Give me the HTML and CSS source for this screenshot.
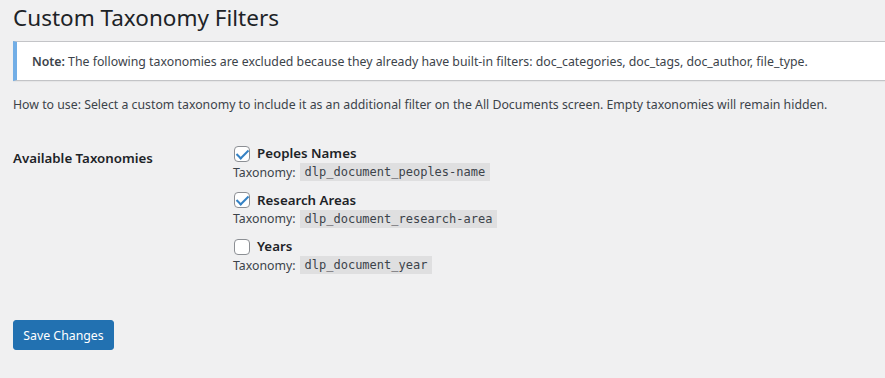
FILE: index.html
```html
<!DOCTYPE html>
<html lang="en">

<head>
    <meta charset="UTF-8" />
    <title>Custom Taxonomy Filters</title>
    <link rel="stylesheet" href="styles.css">
</head>

<body>
    <div class="wrap">
        <h1>Custom Taxonomy Filters</h1>

        <div class="notice">
            <p><strong>Note:</strong> The following taxonomies are excluded because they already have built-in filters: doc_categories, doc_tags, doc_author, file_type.</p>
        </div>

        <p class="howto">How to use: Select a custom taxonomy to include it as an additional filter on the All Documents screen. Empty taxonomies will remain hidden.</p>

        <form>
            <table class="form-table">
                <tr>
                    <th>Available Taxonomies</th>
                    <td>
                        <div class="tax">
                            <label><input type="checkbox" checked> Peoples Names</label>
                            <div class="slug">Taxonomy: <code>dlp_document_peoples-name</code></div>
                        </div>
                        <div class="tax">
                            <label><input type="checkbox" checked> Research Areas</label>
                            <div class="slug">Taxonomy: <code>dlp_document_research-area</code></div>
                        </div>
                        <div class="tax">
                            <label><input type="checkbox"> Years</label>
                            <div class="slug">Taxonomy: <code>dlp_document_year</code></div>
                        </div>
                    </td>
                </tr>
            </table>

            <p class="submit"><button type="button" class="button-primary">Save Changes</button></p>
        </form>
    </div>
</body>

</html>
```

FILE: styles.css
```css
* {
    box-sizing: border-box;
}

html,
body {
    margin: 0;
    padding: 0;
}

body {
    background: #f0f0f1;
    color: #3c434a;
    font-family: "Noto Sans", sans-serif;
    font-size: 12.3px;
    line-height: 1.4;
}

.wrap {
    margin: 0 0 0 13px;
}

h1 {
    margin: 0;
    padding: 3px 0 4px;
    font-size: 22.5px;
    font-weight: 400;
    line-height: 1.3;
    color: #1d2327;
}

.notice {
    background: #fff;
    border: 1px solid #c3c4c7;
    border-left: 4px solid #72aee6;
    border-right: 0;
    box-shadow: 0 1px 1px rgba(0, 0, 0, .04);
    margin: 5px 0 0;
    padding: 1px 15px;
}

.notice p {
    margin: 10px 0 9px;
}

.notice strong {
    font-weight: 600;
}

.howto {
    margin: 15px 0 0;
}

.form-table {
    border-collapse: collapse;
    margin-top: 21px;
}

.form-table th {
    width: 220px;
    vertical-align: top;
    text-align: left;
    padding: 14px 0 0;
    font-size: 13.3px;
    font-weight: 600;
    color: #1d2327;
}

.form-table td {
    padding: 9px 0 0;
    vertical-align: top;
}

.tax {
    margin-bottom: 9.5px;
}

.tax label {
    display: flex;
    align-items: center;
    gap: 7px;
    font-size: 13.3px;
    font-weight: 600;
    color: #1d2327;
    height: 20px;
}

.tax input {
    appearance: none;
    -webkit-appearance: none;
    margin: 0 0 0 1px;
    width: 16px;
    height: 16px;
    border: 1px solid #8c8f94;
    border-radius: 4px;
    background: #fff;
    position: relative;
}

.tax input:checked::before {
    content: "";
    position: absolute;
    left: 4px;
    top: 0;
    width: 5px;
    height: 10px;
    border: solid #3582c4;
    border-width: 0 2.5px 2.5px 0;
    transform: rotate(45deg);
}

.slug {
    display: flex;
    align-items: center;
    gap: 4px;
    height: 17px;
}

code {
    background: rgba(0, 0, 0, .07);
    font-family: "DejaVu Sans Mono", monospace;
    font-size: 12px;
    line-height: 18px;
    padding: 0 5px;
    color: #3c434a;
}

.submit {
    margin: 37px 0 0;
}

.button-primary {
    background: #2271b1;
    border: 1px solid #2271b1;
    border-radius: 3px;
    color: #fff;
    font-family: inherit;
    font-size: 12.3px;
    height: 30px;
    width: 101px;
    padding: 0;
}
```
